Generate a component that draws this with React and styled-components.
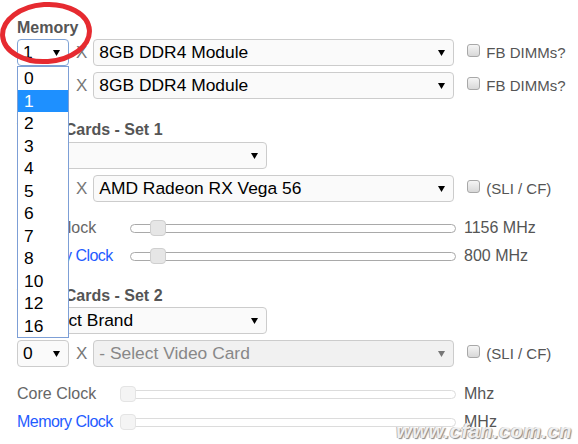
import React from 'react'
import styled, { createGlobalStyle } from 'styled-components'

const GlobalStyle = createGlobalStyle`
  body {
    margin: 0;
    background: #fff;
    font-family: "Liberation Sans", Arial, sans-serif;
  }
`

const qtyOptions = [0, 1, 2, 3, 4, 5, 6, 7, 8, 10, 12, 16]

const Arrow = ({ color = '#000' }) => (
  <svg width="7" height="6" viewBox="0 0 7 6">
    <polygon points="0,0 7,0 3.5,6" fill={color} />
  </svg>
)

const Select = ({ w, text, focus, disabled }) => (
  <SelectBox $w={w} $focus={focus} $disabled={disabled}>
    <span>{text}</span>
    <Arrow color={disabled ? '#777' : '#000'} />
  </SelectBox>
)

const Slider = ({ label, labelW, blue, trackW, thumb, disabled, value }) => (
  <SliderRow>
    <SliderLabel $w={labelW} $blue={blue}>{label}</SliderLabel>
    <Track $w={trackW} $disabled={disabled}>
      <Thumb $left={thumb} $disabled={disabled} />
    </Track>
    <Value>{value}</Value>
  </SliderRow>
)

const CardRow = ({ qty, card, disabled }) => (
  <Row>
    <Select w={52} text={qty} />
    <Times>X</Times>
    <Select w={361} text={card} disabled={disabled} />
    <Check />
    <CheckLabel>(SLI / CF)</CheckLabel>
  </Row>
)

export default function App() {
  return (
    <Page>
      <GlobalStyle />
      <Heading $mb={2}>Memory</Heading>
      <Row $mt={0}>
        <QtyWrap>
          <Select w={52} text="1" focus />
          <ListBox>
            {qtyOptions.map((n) => (
              <Option key={n} $active={n === 1}>{n}</Option>
            ))}
          </ListBox>
        </QtyWrap>
        <Times>X</Times>
        <Select w={361} text="8GB DDR4 Module" />
        <Check />
        <CheckLabel>FB DIMMs?</CheckLabel>
      </Row>
      <Row>
        <Select w={52} text="1" />
        <Times>X</Times>
        <Select w={361} text="8GB DDR4 Module" />
        <Check />
        <CheckLabel>FB DIMMs?</CheckLabel>
      </Row>

      <Heading $mt={22} $mb={3}>Video Cards - Set 1</Heading>
      <Select w={250} text="AMD" />
      <CardRow qty="1" card="AMD Radeon RX Vega 56" />
      <SliderBlock $mt={18}>
        <Slider label="Core Clock" labelW={113} trackW={326} thumb={19} value="1156 MHz" />
        <Slider label="Memory Clock" labelW={113} trackW={326} thumb={19} value="800 MHz" blue />
      </SliderBlock>

      <Heading $mt={23} $mb={2}>Video Cards - Set 2</Heading>
      <Select w={250} text="- Select Brand" />
      <CardRow qty="0" card="- Select Video Card" disabled />
      <SliderBlock $mt={19}>
        <Slider label="Core Clock" labelW={103} trackW={336} thumb={-1} value="Mhz" disabled />
        <Slider label="Memory Clock" labelW={103} trackW={336} thumb={-1} value="MHz" blue disabled />
      </SliderBlock>

      <Circle width="100" height="72" viewBox="0 0 100 72">
        <ellipse cx="46" cy="33" rx="43.5" ry="28.5" fill="none" stroke="#e62a30" strokeWidth="5" transform="rotate(-4 46 33)" />
      </Circle>
      <Watermark>www.cfan.com.cn</Watermark>
    </Page>
  )
}

const Page = styled.div`
  position: relative;
  width: 578px;
  height: 444px;
  box-sizing: border-box;
  padding: 19px 0 0 17px;
  overflow: hidden;
`

const Heading = styled.div`
  font-size: 16px;
  font-weight: 700;
  line-height: 18px;
  color: #555;
  margin-top: ${(p) => p.$mt || 0}px;
  margin-bottom: ${(p) => p.$mb || 0}px;
`

const Row = styled.div`
  display: flex;
  align-items: center;
  height: 27px;
  margin-top: ${(p) => (p.$mt ?? 6)}px;
`

const SelectBox = styled.div`
  width: ${(p) => p.$w}px;
  height: 27px;
  box-sizing: border-box;
  display: flex;
  align-items: center;
  justify-content: space-between;
  padding: 0 8px 0 5px;
  border: 1px solid ${(p) => (p.$focus ? '#7fa3d6' : '#ccc')};
  border-radius: 4px;
  background: ${(p) => (p.$focus ? '#fff' : p.$disabled ? '#f1f1f1' : '#fafafa')};
  color: ${(p) => (p.$disabled ? '#888' : '#000')};
  font-size: 17.4px;
  white-space: nowrap;
  flex-shrink: 0;

  svg {
    flex-shrink: 0;
    margin-top: 1px;
  }
`

const QtyWrap = styled.div`
  position: relative;
`

const ListBox = styled.div`
  position: absolute;
  top: 100%;
  left: 0;
  width: 52px;
  box-sizing: border-box;
  border: 1px solid #7d9fd6;
  background: #fff;
  z-index: 5;
`

const Option = styled.div`
  height: 22.5px;
  line-height: 22.5px;
  padding-left: 6px;
  font-size: 17.4px;
  color: ${(p) => (p.$active ? '#fff' : '#000')};
  background: ${(p) => (p.$active ? '#1e90ff' : 'transparent')};
`

const Times = styled.span`
  font-size: 17px;
  color: #777;
  margin: 0 6px 0 7px;
`

const Check = styled.span`
  width: 13px;
  height: 13px;
  box-sizing: border-box;
  border: 1px solid #a8a8a8;
  border-radius: 3px;
  background: linear-gradient(#f5f5f5, #d8d8d8);
  margin: -4px 6px 0 13px;
  flex-shrink: 0;
`

const CheckLabel = styled.span`
  font-size: 15px;
  color: #555;
  white-space: nowrap;
`

const SliderBlock = styled.div`
  display: flex;
  flex-direction: column;
  gap: 12px;
  margin-top: ${(p) => p.$mt}px;
`

const SliderRow = styled.div`
  display: flex;
  align-items: center;
  height: 16px;
`

const SliderLabel = styled.span`
  width: ${(p) => p.$w}px;
  flex-shrink: 0;
  font-size: 16px;
  letter-spacing: ${(p) => (p.$blue ? '-0.55px' : '0')};
  color: ${(p) => (p.$blue ? '#1f5cff' : '#666')};
  white-space: nowrap;
`

const Track = styled.div`
  position: relative;
  width: ${(p) => p.$w}px;
  height: 9px;
  box-sizing: border-box;
  border: 1px solid ${(p) => (p.$disabled ? '#dcdcdc' : '#a9a9a9')};
  border-radius: 5px;
  background: #fff;
  flex-shrink: 0;
`

const Thumb = styled.span`
  position: absolute;
  top: 50%;
  left: ${(p) => p.$left}px;
  width: 16px;
  height: 16px;
  transform: translateY(-50%);
  box-sizing: border-box;
  border: 1px solid ${(p) => (p.$disabled ? '#e4e4e4' : '#cfcfcf')};
  border-radius: 4px;
  background: ${(p) => (p.$disabled ? '#f4f4f4' : '#e6e6e6')};
`

const Value = styled.span`
  margin-left: 8px;
  font-size: 16px;
  color: #555;
  white-space: nowrap;
`

const Circle = styled.svg`
  position: absolute;
  left: 0;
  top: 0;
  z-index: 10;
  pointer-events: none;
`

const Watermark = styled.div`
  position: absolute;
  right: 6px;
  bottom: 1px;
  font-size: 20px;
  font-weight: 700;
  font-style: italic;
  letter-spacing: 0.5px;
  color: rgba(255, 255, 255, 0.85);
  text-shadow: 1px 1px 1px #888, -1px 0 0 #bbb;
  z-index: 10;
`
